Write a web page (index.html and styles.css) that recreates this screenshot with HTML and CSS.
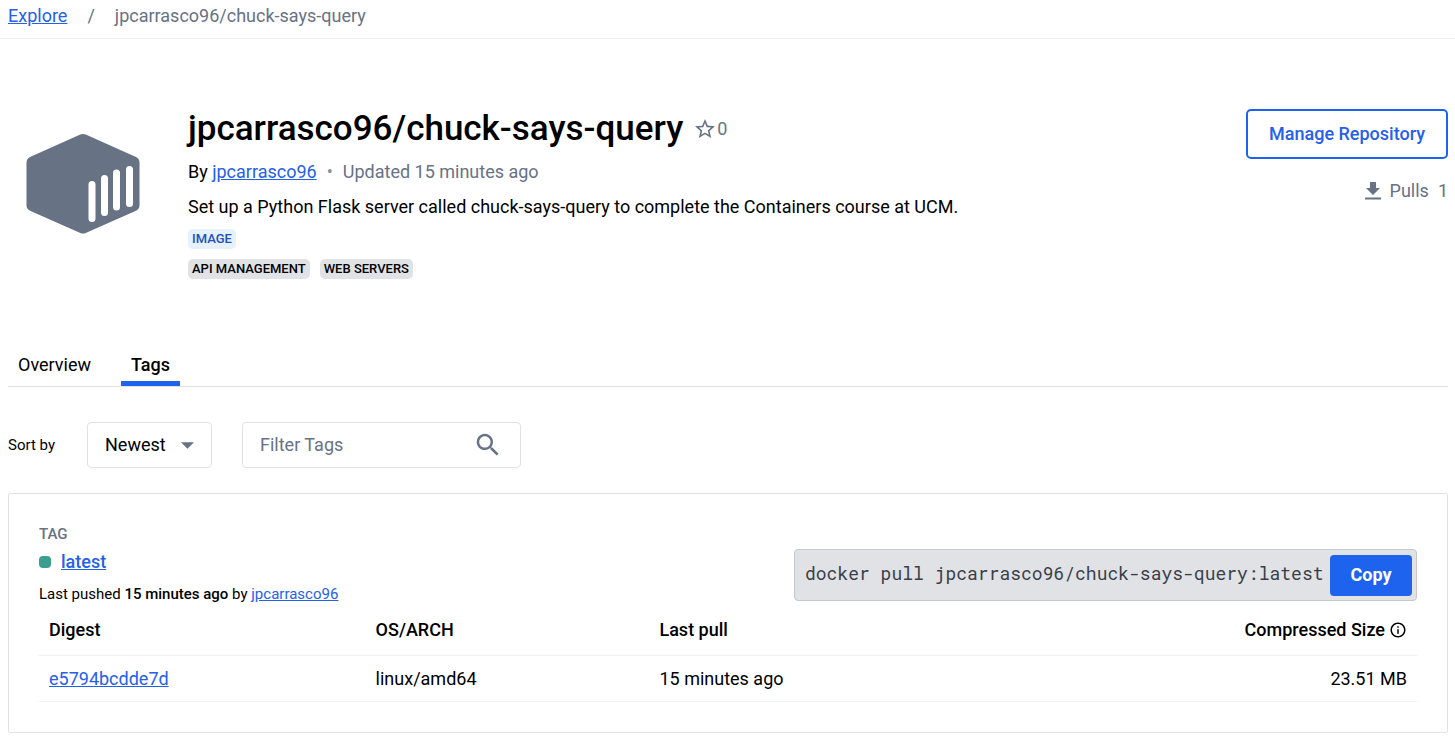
FILE: index.html
```html
<!DOCTYPE html>
<html lang="en">
<head>
<meta charset="utf-8">
<meta name="viewport" content="width=device-width, initial-scale=1">
<title>jpcarrasco96/chuck-says-query</title>
<link rel="stylesheet" href="styles.css">
</head>
<body>
<nav class="breadcrumb" aria-label="Breadcrumb">
  <a href="#">Explore</a>
  <span>/</span>
  <span>jpcarrasco96/chuck-says-query</span>
</nav>
<main class="page">
  <header class="repo">
    <svg class="repo-logo" viewBox="0 0 114 102" aria-hidden="true">
      <path fill="#677285" d="M54.300 1.600Q57 .5 59.700 1.600L110 24Q113.500 25.800 113.500 29.500V72.500Q113.500 76 110 77.800L59.700 100Q57 101.200 54.300 100L4 77.800Q.5 76 .5 72.500V29.500Q.5 25.800 4 24Z"/>
      <g stroke="#fff" stroke-width="7" stroke-linecap="round">
        <path d="M66 51.500V85.500M78.500 45.500V79.500M90.500 40V74M103.500 36.500V70.500"/>
      </g>
    </svg>
    <div class="repo-info">
      <div class="title-row">
        <h1>jpcarrasco96/chuck-says-query</h1>
        <button class="star" type="button" aria-label="Star this repository">
          <svg viewBox="2 2 20 20" aria-hidden="true"><path d="m22 9.240-7.190-.62L12 2 9.190 8.630 2 9.240l5.460 4.730L5.820 21 12 17.270 18.180 21l-1.630-7.030L22 9.240zM12 15.400l-3.760 2.270 1-4.280-3.320-2.880 4.380-.38L12 6.100l1.710 4.040 4.380.38-3.320 2.880 1 4.280L12 15.400z"/></svg>
          <span>0</span>
        </button>
      </div>
      <p class="byline">By <a href="#">jpcarrasco96</a><span class="dot">•</span><span class="muted">Updated 15 minutes ago</span></p>
      <p class="description">Set up a Python Flask server called chuck-says-query to complete the Containers course at UCM.</p>
      <div class="badges"><span class="badge badge-image">IMAGE</span></div>
      <div class="badges"><span class="badge">API MANAGEMENT</span><span class="badge">WEB SERVERS</span></div>
    </div>
    <div class="repo-side">
      <button class="manage" type="button">Manage Repository</button>
      <div class="pulls">
        <svg viewBox="4 3 16 18" aria-hidden="true"><path d="M19 9h-4V3H9v6H5l7 7 7-7zM4 18.500v2h16v-2H4z"/></svg>
        <span>Pulls</span><span>1</span>
      </div>
    </div>
  </header>

  <nav class="tabs" aria-label="Repository">
    <a href="#">Overview</a>
    <a href="#" class="active" aria-current="page">Tags</a>
  </nav>

  <div class="filters">
    <label for="sort">Sort by</label>
    <div class="select-box">
      <select id="sort"><option>Newest</option><option>Oldest</option><option>A-Z</option><option>Z-A</option></select>
      <svg viewBox="0 0 14 7" aria-hidden="true"><path d="M0 0h14L7 7z"/></svg>
    </div>
    <div class="search-box">
      <input type="text" placeholder="Filter Tags" aria-label="Filter Tags">
      <svg viewBox="0 0 24 24" aria-hidden="true"><path d="M15.500 14h-.79l-.28-.27C15.410 12.590 16 11.110 16 9.500 16 5.910 13.090 3 9.500 3S3 5.910 3 9.500 5.910 16 9.500 16c1.610 0 3.090-.59 4.230-1.570l.27.28v.79l5 4.990L20.490 19l-4.990-5zm-6 0C7.010 14 5 11.990 5 9.500S7.010 5 9.500 5 14 7.010 14 9.500 11.990 14 9.500 14z"/></svg>
    </div>
  </div>

  <section class="card">
    <div class="card-head">
      <div>
        <div class="tag-label">TAG</div>
        <div class="tag-name"><span class="status"></span><a href="#">latest</a></div>
        <p class="pushed">Last pushed <strong>15 minutes ago</strong> by <a href="#">jpcarrasco96</a></p>
      </div>
      <div class="command">
        <input type="text" readonly aria-label="Pull command" value="docker pull jpcarrasco96/chuck-says-query:latest">
        <button type="button">Copy</button>
      </div>
    </div>
    <table class="digests">
      <thead>
        <tr><th>Digest</th><th>OS/ARCH</th><th>Last pull</th><th><span class="size-head">Compressed Size <svg viewBox="0 0 24 24" aria-hidden="true"><path d="M11 7h2v2h-2zm0 4h2v6h-2zm1-9C6.480 2 2 6.480 2 12s4.480 10 10 10 10-4.480 10-10S17.520 2 12 2zm0 18c-4.410 0-8-3.590-8-8s3.590-8 8-8 8 3.590 8 8-3.590 8-8 8z"/></svg></span></th></tr>
      </thead>
      <tbody>
        <tr><td><a href="#">e5794bcdde7d</a></td><td>linux/amd64</td><td>15 minutes ago</td><td>23.51 MB</td></tr>
      </tbody>
    </table>
  </section>
</main>
</body>
</html>
```
FILE: styles.css
```css
* { box-sizing: border-box; }
body {
  margin: 0;
  background: #fff;
  color: #000;
  font: 18px/24px Roboto, "Liberation Sans", sans-serif;
}
h1, p { margin: 0; }
a { color: #2560e8; text-decoration: underline; }
button, input, select { font: inherit; }
svg { display: block; flex: none; fill: #677285; }

.breadcrumb {
  display: flex;
  gap: 20px;
  padding: 4px 8px 10px;
  border-bottom: 1px solid #f0f0f2;
  color: #677285;
}
.page { padding: 0 7px 10px 8px; }

.repo {
  display: flex;
  align-items: flex-start;
  padding-top: 70px;
}
.repo-logo { width: 114px; height: 102px; margin: 24px 48px 0 18px; }
.repo-info { flex: 1; }
.title-row { display: flex; align-items: center; gap: 12px; }
h1 { font-size: 35px; line-height: 40px; font-weight: 500; }
.star {
  display: flex;
  align-items: center;
  gap: 2px;
  padding: 0;
  border: 0;
  background: none;
  color: #677285;
}
.star svg { width: 20px; height: 20px; }
.byline { margin-top: 11px; }
.dot { margin: 0 10px; color: #8993a5; }
.muted { color: #677285; }
.description { margin-top: 11px; }
.badges { display: flex; gap: 10px; margin-top: 10px; }
.badge {
  padding: 0 4px;
  border-radius: 5px;
  background: #e1e2e6;
  font-size: 13px;
  line-height: 20px;
  font-weight: 500;
}
.badge-image { background: #e5f2fc; color: #1d4fbf; }
.repo-side { display: flex; flex-direction: column; align-items: flex-end; }
.manage {
  height: 50px;
  padding: 0 21px;
  border: 2px solid #1d63ed;
  border-radius: 5px;
  background: #fff;
  color: #2560e8;
  font-weight: 500;
}
.pulls { display: flex; align-items: center; gap: 9px; margin-top: 20px; color: #677285; }
.pulls svg { width: 16px; height: 18px; }

.tabs {
  display: flex;
  gap: 20px;
  margin-top: 64px;
  border-bottom: 1px solid #e1e2e6;
}
.tabs a {
  padding: 10px 10px 4px;
  border-bottom: 5px solid transparent;
  color: #000;
  text-decoration: none;
}
.tabs .active { border-color: #1d63ed; font-weight: 500; }

.filters { display: flex; align-items: center; margin-top: 35px; }
.filters label { width: 79px; font-size: 15px; }
.select-box, .search-box {
  display: flex;
  align-items: center;
  height: 46px;
  border: 1px solid #e1e2e6;
  border-radius: 4px;
}
.select-box { position: relative; width: 125px; }
.select-box select {
  appearance: none;
  width: 100%;
  height: 100%;
  padding: 0 36px 0 17px;
  border: 0;
  background: none;
  color: #000;
}
.select-box svg { position: absolute; right: 17px; width: 13px; height: 7px; pointer-events: none; }
.search-box { width: 279px; margin-left: 30px; padding: 0 17px; }
.search-box input {
  flex: 1;
  min-width: 0;
  padding: 0;
  border: 0;
  outline: 0;
  background: none;
}
.search-box input::placeholder { color: #677285; opacity: 1; }
.search-box svg { width: 30px; height: 30px; }

.card {
  margin-top: 25px;
  padding: 28px 30px 30px;
  border: 1px solid #e1e2e6;
  border-radius: 2px;
}
.card-head { display: flex; justify-content: space-between; align-items: flex-end; }
.tag-label { color: #677285; font-size: 15px; font-weight: 500; }
.tag-name { display: flex; align-items: center; gap: 10px; margin-top: 4px; font-weight: 500; }
.status { width: 12px; height: 12px; border-radius: 4px; background: #3ba08d; }
.pushed { margin-top: 8px; font-size: 15px; }
.pushed strong { font-weight: 500; }
.command {
  display: flex;
  align-items: center;
  width: 623px;
  height: 52px;
  margin-bottom: 5px;
  padding: 0 4px 0 10px;
  border: 1px solid #c4c8d1;
  border-radius: 4px;
  background: #e1e2e6;
}
.command input {
  flex: 1;
  min-width: 0;
  padding: 0 0 4px;
  border: 0;
  background: none;
  color: #393f49;
  font-family: "Roboto Mono", "Liberation Mono", monospace;
}
.command button {
  width: 82px;
  height: 41px;
  border: 0;
  border-radius: 4px;
  background: #1d63ed;
  color: #fff;
  font-weight: 700;
}
.digests { width: 100%; border-collapse: collapse; table-layout: fixed; }
.digests th, .digests td {
  padding: 11px 10px 10px;
  border-bottom: 1px solid #f0f1f3;
  text-align: left;
}
.digests th { padding: 12px 10px 13px; font-weight: 500; }
.digests th:nth-child(1) { width: 23.7%; }
.digests th:nth-child(2) { width: 20.6%; }
.digests th:nth-child(3) { width: 24.6%; }
.digests th:last-child, .digests td:last-child { text-align: right; }
.size-head { display: flex; justify-content: flex-end; align-items: center; gap: 4px; }
.size-head svg { width: 18px; height: 18px; fill: #000; }
```
